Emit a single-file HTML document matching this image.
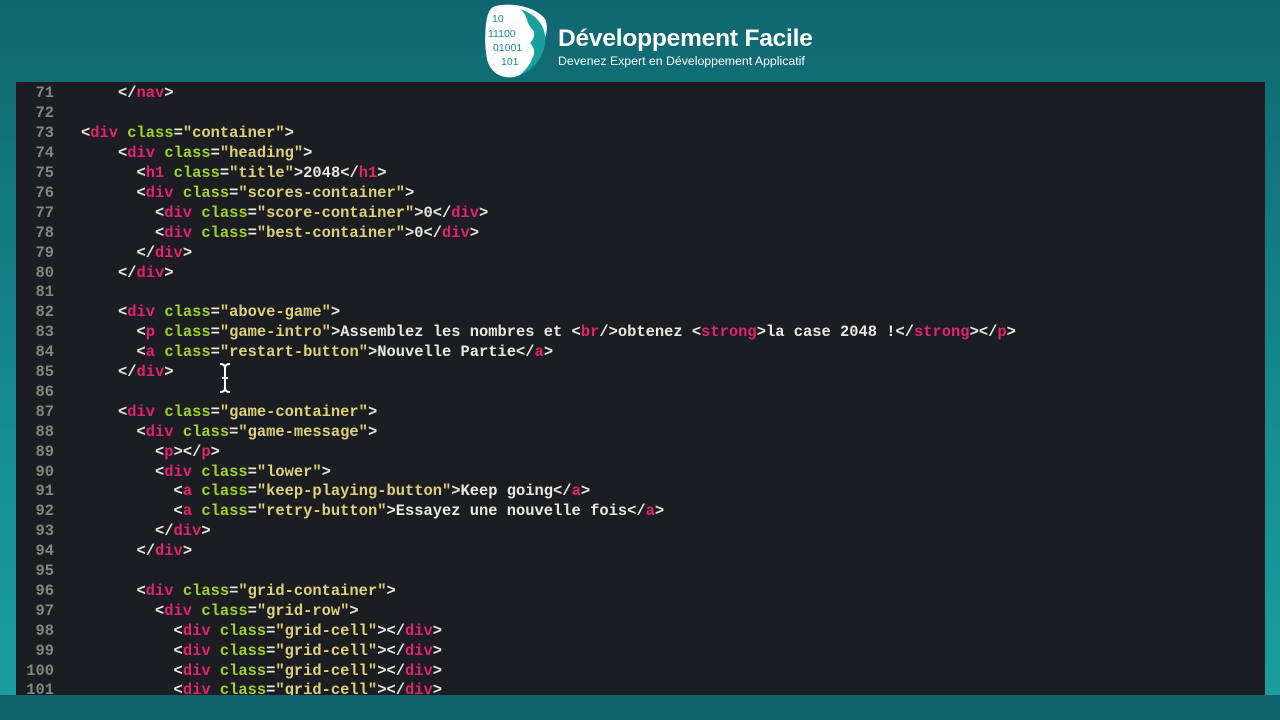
<!DOCTYPE html>
<html><head><meta charset="utf-8"><style>
html,body{margin:0;padding:0}
body{width:1280px;height:720px;overflow:hidden;position:relative;background:linear-gradient(180deg,#0f6670 0%,#168d92 60%,#1a9fa0 100%);font-family:"Liberation Sans",sans-serif}
.bottom{position:absolute;left:0;top:695px;width:1280px;height:25px;background:#0d626b}
.panel{position:absolute;left:16px;top:82px;width:1249px;height:613px;background:#1b1d20;overflow:hidden}
.ln{position:absolute;left:0;height:20px;width:1249px;font-family:"Liberation Mono",monospace;font-size:15.43px;font-weight:bold;line-height:20px;color:#e8e8e2;white-space:pre}
.n{position:absolute;left:0;width:38px;text-align:right;color:#84857f}
.c{position:absolute;left:65px}
.t{color:#e0236c}.a{color:#9fd22c}.s{color:#ddd07a}
.logo{position:absolute;left:484px;top:3px;width:64px;height:76px}
.title{position:absolute;left:558px;top:25px;color:#fff;font-weight:bold;font-size:24.5px;letter-spacing:-0.2px}
.sub{position:absolute;left:558px;top:54px;color:#fff;font-size:12.3px}
</style></head><body>
<svg class="logo" viewBox="0 0 64 76"><path d="M12 3 C28 -1 52 4 61 16 C66 26 60 40 54 52 C48 64 40 72 30 74 C18 76 6 70 3 56 C0 42 1 20 4 11 C6 6 8 4 12 3 Z" fill="#fff"/><path d="M36 6 C44 12 42 20 48 26 C52 30 50 36 46 40 C50 44 52 50 48 56 C46 62 42 66 36 72 C48 68 56 58 60 46 C64 32 60 14 36 6Z" fill="#1a9fa0"/>
<g font-family="Liberation Sans" font-size="10.5" fill="#1b8a92"><text x="8" y="19">10</text><text x="4" y="34">11100</text><text x="9" y="48">01001</text><text x="17" y="62">101</text></g></svg>
<div class="title">Développement Facile</div>
<div class="sub">Devenez Expert en Développement Applicatif</div>
<div class="panel">
<div class="ln" style="top:1px"><span class="n">71</span><span class="c">    &lt;/<span class="t">nav</span>&gt;</span></div>
<div class="ln" style="top:21px"><span class="n">72</span></div>
<div class="ln" style="top:41px"><span class="n">73</span><span class="c">&lt;<span class="t">div</span> <span class="a">class</span>=<span class="s">"container"</span>&gt;</span></div>
<div class="ln" style="top:61px"><span class="n">74</span><span class="c">    &lt;<span class="t">div</span> <span class="a">class</span>=<span class="s">"heading"</span>&gt;</span></div>
<div class="ln" style="top:81px"><span class="n">75</span><span class="c">      &lt;<span class="t">h1</span> <span class="a">class</span>=<span class="s">"title"</span>&gt;2048&lt;/<span class="t">h1</span>&gt;</span></div>
<div class="ln" style="top:101px"><span class="n">76</span><span class="c">      &lt;<span class="t">div</span> <span class="a">class</span>=<span class="s">"scores-container"</span>&gt;</span></div>
<div class="ln" style="top:121px"><span class="n">77</span><span class="c">        &lt;<span class="t">div</span> <span class="a">class</span>=<span class="s">"score-container"</span>&gt;0&lt;/<span class="t">div</span>&gt;</span></div>
<div class="ln" style="top:141px"><span class="n">78</span><span class="c">        &lt;<span class="t">div</span> <span class="a">class</span>=<span class="s">"best-container"</span>&gt;0&lt;/<span class="t">div</span>&gt;</span></div>
<div class="ln" style="top:161px"><span class="n">79</span><span class="c">      &lt;/<span class="t">div</span>&gt;</span></div>
<div class="ln" style="top:181px"><span class="n">80</span><span class="c">    &lt;/<span class="t">div</span>&gt;</span></div>
<div class="ln" style="top:200px"><span class="n">81</span></div>
<div class="ln" style="top:220px"><span class="n">82</span><span class="c">    &lt;<span class="t">div</span> <span class="a">class</span>=<span class="s">"above-game"</span>&gt;</span></div>
<div class="ln" style="top:240px"><span class="n">83</span><span class="c">      &lt;<span class="t">p</span> <span class="a">class</span>=<span class="s">"game-intro"</span>&gt;Assemblez les nombres et &lt;<span class="t">br</span>/&gt;obtenez &lt;<span class="t">strong</span>&gt;la case 2048 !&lt;/<span class="t">strong</span>&gt;&lt;/<span class="t">p</span>&gt;</span></div>
<div class="ln" style="top:260px"><span class="n">84</span><span class="c">      &lt;<span class="t">a</span> <span class="a">class</span>=<span class="s">"restart-button"</span>&gt;Nouvelle Partie&lt;/<span class="t">a</span>&gt;</span></div>
<div class="ln" style="top:280px"><span class="n">85</span><span class="c">    &lt;/<span class="t">div</span>&gt;</span></div>
<div class="ln" style="top:300px"><span class="n">86</span></div>
<div class="ln" style="top:320px"><span class="n">87</span><span class="c">    &lt;<span class="t">div</span> <span class="a">class</span>=<span class="s">"game-container"</span>&gt;</span></div>
<div class="ln" style="top:340px"><span class="n">88</span><span class="c">      &lt;<span class="t">div</span> <span class="a">class</span>=<span class="s">"game-message"</span>&gt;</span></div>
<div class="ln" style="top:360px"><span class="n">89</span><span class="c">        &lt;<span class="t">p</span>&gt;&lt;/<span class="t">p</span>&gt;</span></div>
<div class="ln" style="top:380px"><span class="n">90</span><span class="c">        &lt;<span class="t">div</span> <span class="a">class</span>=<span class="s">"lower"</span>&gt;</span></div>
<div class="ln" style="top:399px"><span class="n">91</span><span class="c">          &lt;<span class="t">a</span> <span class="a">class</span>=<span class="s">"keep-playing-button"</span>&gt;Keep going&lt;/<span class="t">a</span>&gt;</span></div>
<div class="ln" style="top:419px"><span class="n">92</span><span class="c">          &lt;<span class="t">a</span> <span class="a">class</span>=<span class="s">"retry-button"</span>&gt;Essayez une nouvelle fois&lt;/<span class="t">a</span>&gt;</span></div>
<div class="ln" style="top:439px"><span class="n">93</span><span class="c">        &lt;/<span class="t">div</span>&gt;</span></div>
<div class="ln" style="top:459px"><span class="n">94</span><span class="c">      &lt;/<span class="t">div</span>&gt;</span></div>
<div class="ln" style="top:479px"><span class="n">95</span></div>
<div class="ln" style="top:499px"><span class="n">96</span><span class="c">      &lt;<span class="t">div</span> <span class="a">class</span>=<span class="s">"grid-container"</span>&gt;</span></div>
<div class="ln" style="top:519px"><span class="n">97</span><span class="c">        &lt;<span class="t">div</span> <span class="a">class</span>=<span class="s">"grid-row"</span>&gt;</span></div>
<div class="ln" style="top:539px"><span class="n">98</span><span class="c">          &lt;<span class="t">div</span> <span class="a">class</span>=<span class="s">"grid-cell"</span>&gt;&lt;/<span class="t">div</span>&gt;</span></div>
<div class="ln" style="top:559px"><span class="n">99</span><span class="c">          &lt;<span class="t">div</span> <span class="a">class</span>=<span class="s">"grid-cell"</span>&gt;&lt;/<span class="t">div</span>&gt;</span></div>
<div class="ln" style="top:579px"><span class="n">100</span><span class="c">          &lt;<span class="t">div</span> <span class="a">class</span>=<span class="s">"grid-cell"</span>&gt;&lt;/<span class="t">div</span>&gt;</span></div>
<div class="ln" style="top:598px"><span class="n">101</span><span class="c">          &lt;<span class="t">div</span> <span class="a">class</span>=<span class="s">"grid-cell"</span>&gt;&lt;/<span class="t">div</span>&gt;</span></div>
</div>
<div class="bottom"></div>
<svg style="position:absolute;left:218px;top:362px" width="14" height="32" viewBox="0 0 14 32"><path d="M2 2 Q7 2 7 6 L7 26 Q7 30 12 30 M12 2 Q7 2 7 6 M7 26 Q7 30 2 30 M4 16 L10 16" stroke="#fff" stroke-width="2" fill="none"/></svg>
</body></html>
